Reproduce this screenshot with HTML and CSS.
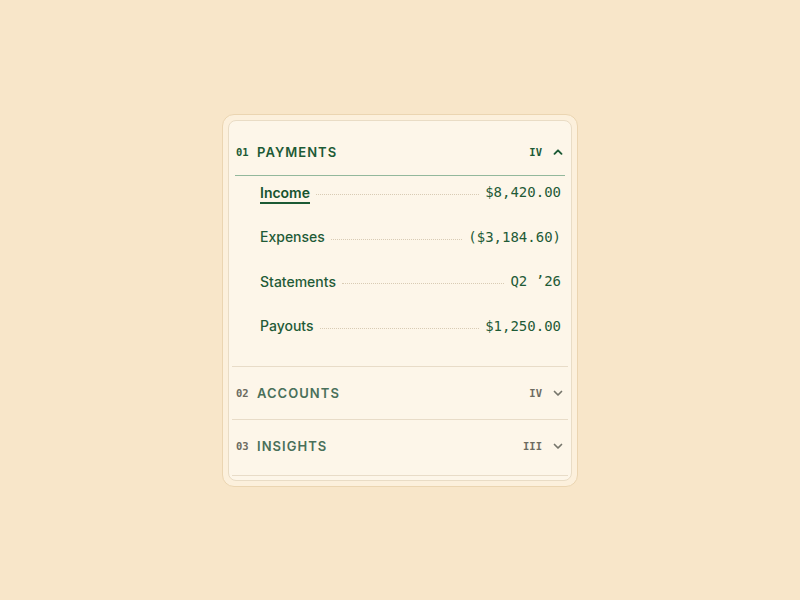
FILE: index.html
```html
<!DOCTYPE html>
<html>
<head>
<meta charset="utf-8">
<link rel="stylesheet" href="styles.css">
</head>
<body>
<div class="stage">
  <div class="card">
    <div class="inner">
      <section class="sec open">
        <div class="head">
          <span class="num">01</span>
          <span class="title">PAYMENTS</span>
          <span class="roman">IV</span>
          <svg class="chev" viewBox="0 0 10 10" width="10" height="10"><path d="M1.5 6.8 L5 3.3 L8.5 6.8" fill="none" stroke="currentColor" stroke-width="1.9" stroke-linecap="round" stroke-linejoin="round"/></svg>
        </div>
        <div class="body">
          <div class="row"><span class="label active">Income</span><span class="dots"></span><span class="val">$8,420.00</span></div>
          <div class="row"><span class="label">Expenses</span><span class="dots"></span><span class="val">($3,184.60)</span></div>
          <div class="row"><span class="label">Statements</span><span class="dots"></span><span class="val">Q2 ’26</span></div>
          <div class="row"><span class="label">Payouts</span><span class="dots"></span><span class="val">$1,250.00</span></div>
        </div>
      </section>
      <section class="sec">
        <div class="head">
          <span class="num">02</span>
          <span class="title">ACCOUNTS</span>
          <span class="roman">IV</span>
          <svg class="chev" viewBox="0 0 10 10" width="10" height="10"><path d="M1.5 3.5 L5 7 L8.5 3.5" fill="none" stroke="currentColor" stroke-width="1.7" stroke-linecap="round" stroke-linejoin="round"/></svg>
        </div>
      </section>
      <section class="sec">
        <div class="head">
          <span class="num">03</span>
          <span class="title">INSIGHTS</span>
          <span class="roman">III</span>
          <svg class="chev" viewBox="0 0 10 10" width="10" height="10"><path d="M1.5 3.5 L5 7 L8.5 3.5" fill="none" stroke="currentColor" stroke-width="1.7" stroke-linecap="round" stroke-linejoin="round"/></svg>
        </div>
      </section>
    </div>
  </div>
</div>
</body>
</html>
```

FILE: styles.css
```css
html, body {
  margin: 0;
  padding: 0;
  background: #f8e6c9;
  font-family: "Inter", "Liberation Sans", sans-serif;
}
.stage {
  width: 800px;
  height: 600px;
  display: flex;
  align-items: flex-start;
  justify-content: center;
  padding-top: 114px;
  box-sizing: border-box;
}
.card {
  width: 356px;
  box-sizing: border-box;
  padding: 5px;
  background: #fcf0dc;
  border: 1px solid #ebd5b1;
  border-radius: 12px;
}
.inner {
  box-sizing: border-box;
  background: #fdf6e9;
  border: 1px solid #e9dcc5;
  border-radius: 8px;
  padding: 3px 3px 4px;
}
.sec {
  border-bottom: 1px solid #e8dcc8;
}
.head {
  height: 52px;
  display: flex;
  align-items: center;
  margin: 0 3px;
  padding: 0 2px 0 1px;
  color: #49705a;
}
.sec.open .head {
  height: 46px;
  padding-top: 5px;
  border-bottom: 1px solid #93b89c;
  color: #1c5a35;
}
.sec:last-child .head {
  height: 52px;
  padding-bottom: 3px;
}
.num {
  font-family: "DejaVu Sans Mono", monospace;
  font-weight: bold;
  font-size: 10.5px;
  color: #6c6b60;
  width: 21px;
}
.sec.open .num { color: #1c5a35; }
.title {
  font-weight: 600;
  font-size: 13px;
  letter-spacing: 0.08em;
  flex: 1;
}
.roman {
  font-family: "DejaVu Sans Mono", monospace;
  font-weight: bold;
  font-size: 10.5px;
  color: #6c6b60;
  margin-right: 11px;
}
.sec.open .roman { color: #1c5a35; }
.chev {
  color: #76756b;
  display: block;
}
.sec.open .chev { color: #1c5a35; }
.body {
  padding: 4px 7px 28px 28px;
  display: flex;
  flex-direction: column;
  gap: 20.5px;
}
.row {
  height: 24px;
  display: flex;
  align-items: center;
  color: #1f5b37;
}
.label {
  font-size: 14px;
  font-weight: 500;
  position: relative;
}
.label.active {
  font-weight: 600;
  color: #17532f;
}
.label.active::after {
  content: "";
  position: absolute;
  left: 0;
  right: 0;
  bottom: -3px;
  height: 2px;
  background: #1c5a35;
}
.dots {
  flex: 1;
  margin: 5px 6px 0;
  border-bottom: 1px dotted #d8cbb4;
}
.val {
  font-family: "DejaVu Sans Mono", monospace;
  font-size: 14px;
  color: #1f5b37;
}
```
